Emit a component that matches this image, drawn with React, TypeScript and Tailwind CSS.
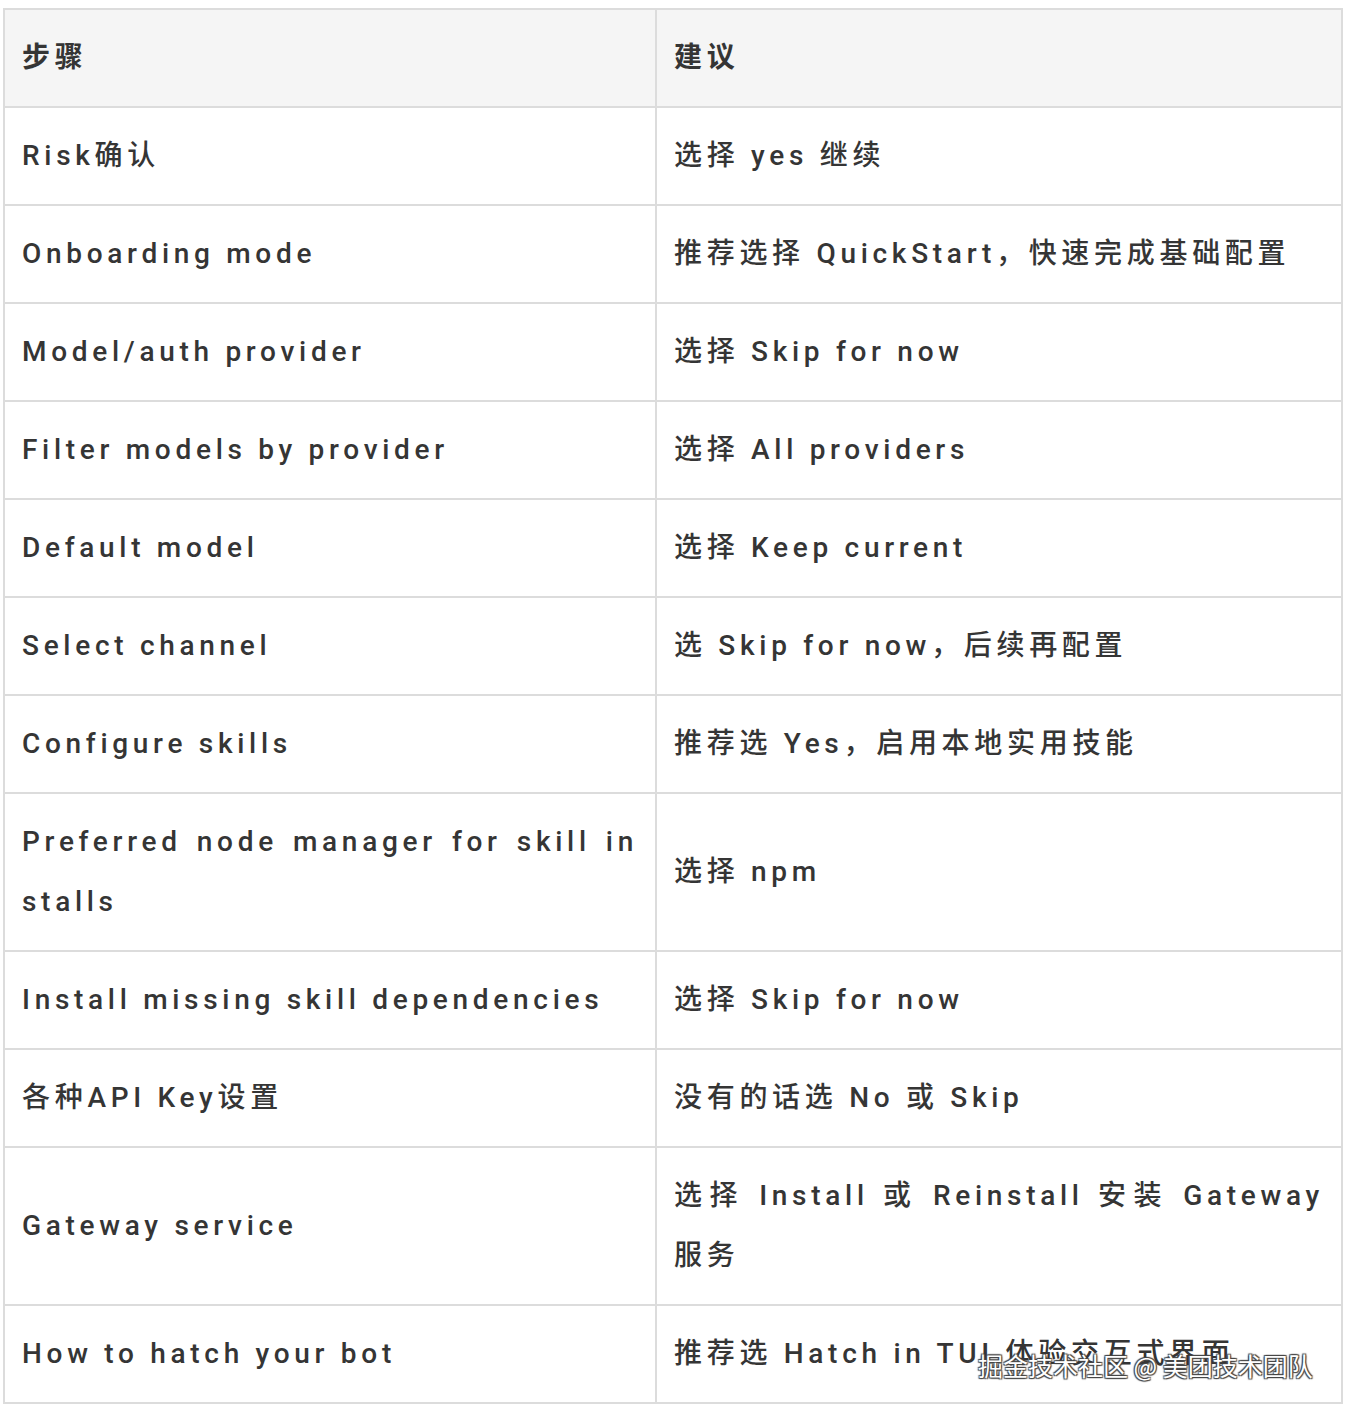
import React from "react";

const rows: [string, string][] = [
  ["Risk确认", "选择 yes 继续"],
  ["Onboarding mode", "推荐选择 QuickStart，快速完成基础配置"],
  ["Model/auth provider", "选择 Skip for now"],
  ["Filter models by provider", "选择 All providers"],
  ["Default model", "选择 Keep current"],
  ["Select channel", "选 Skip for now，后续再配置"],
  ["Configure skills", "推荐选 Yes，启用本地实用技能"],
  ["Preferred node manager for skill installs", "选择 npm"],
  ["Install missing skill dependencies", "选择 Skip for now"],
  ["各种API Key设置", "没有的话选 No 或 Skip"],
  ["Gateway service", "选择 Install 或 Reinstall 安装 Gateway 服务"],
  ["How to hatch your bot", "推荐选 Hatch in TUI 体验交互式界面"],
];

export default function App() {
  return (
    <div
      className="w-[1348px] min-h-[1414px] bg-white pt-[8px] pl-[3px] relative"
      style={{ fontFamily: '"Roboto", "Noto Sans CJK SC", sans-serif' }}
    >
      <table className="border-collapse w-[1338px] table-fixed text-[#353535] text-[28px] leading-[60px] tracking-[4.7px]">
        <colgroup>
          <col className="w-[652px]" />
          <col className="w-[686px]" />
        </colgroup>
        <thead>
          <tr className="bg-[#f5f5f5]">
            <th className="border-2 border-[#dcdcdc] px-[17px] py-[18px] text-left font-bold">步骤</th>
            <th className="border-2 border-[#dcdcdc] px-[17px] py-[18px] text-left font-bold">建议</th>
          </tr>
        </thead>
        <tbody>
          {rows.map(([a, b], i) => (
            <tr key={i}>
              <td className="border-2 border-[#dcdcdc] px-[17px] py-[18px] font-medium text-justify break-all align-middle">
                {a}
              </td>
              <td className="border-2 border-[#dcdcdc] px-[17px] py-[18px] font-medium text-justify align-middle">
                {b}
              </td>
            </tr>
          ))}
        </tbody>
      </table>
      <div
        className="absolute left-[978px] top-[1349px] text-[25px] leading-[32px] text-white tracking-[0px]"
        style={{
          fontFamily: '"Noto Sans CJK SC", sans-serif',
          textShadow:
            "1px 1px 1px #444, -1px -1px 1px #444, 1px -1px 1px #444, -1px 1px 1px #444",
        }}
      >
        掘金技术社区 @ 美团技术团队
      </div>
    </div>
  );
}
